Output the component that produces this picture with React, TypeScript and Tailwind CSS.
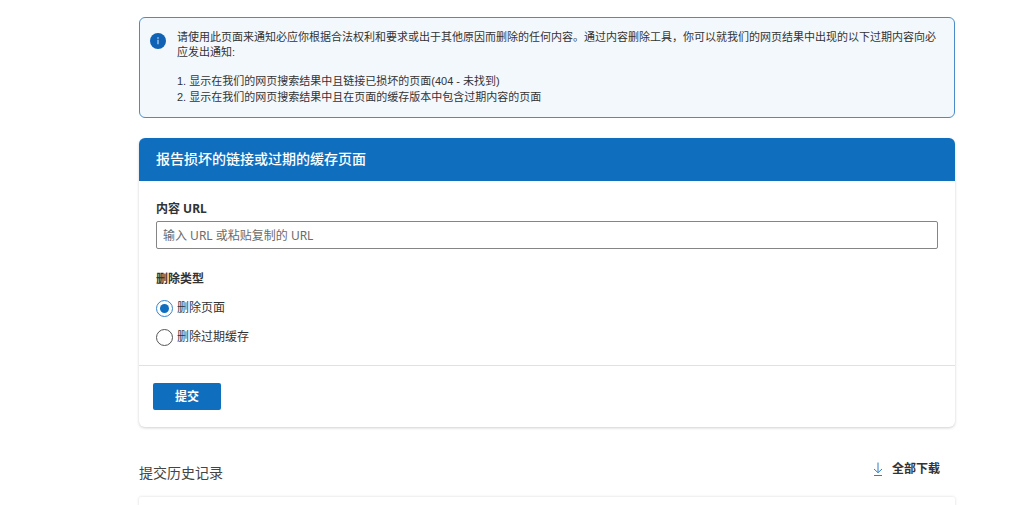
import React, { useState } from 'react';

const removalTypes = [
    { id: 'page', label: '删除页面' },
    { id: 'cache', label: '删除过期缓存' },
];

const InfoIcon = () => (
    <svg className="mt-[15px] h-4 w-4 shrink-0" viewBox="0 0 16 16" aria-hidden="true">
        <circle cx="8" cy="8" r="8" fill="#0f62b4" />
        <path d="M8 6.8v4.4" stroke="#cfe2f5" strokeWidth="1.1" />
        <circle cx="8" cy="5" r="0.8" fill="#cfe2f5" />
    </svg>
);

const DownloadIcon = () => (
    <svg className="h-4 w-3" viewBox="0 0 12 16" fill="none" stroke="#2f7fc6" aria-hidden="true">
        <path d="M6 1.5v10M2 8 6 11.7 10 8M2 14.5h8" />
    </svg>
);

const Notice = () => (
    <section className="flex gap-[11px] rounded-md border border-[#4a8cc9] bg-[#f3f8fd] pr-3 pl-[10px]">
        <InfoIcon />
        <div className="py-3 font-['Liberation_Sans','Noto_Sans_CJK_SC',sans-serif] text-[11px] leading-[15px] text-[#333]">
            <p>
                请使用此页面来通知必应你根据合法权利和要求或出于其他原因而删除的任何内容。通过内容删除工具，你可以就我们的网页结果中出现的以下过期内容向必应发出通知:
            </p>
            <ol className="mt-[13px] leading-4">
                <li>1. 显示在我们的网页搜索结果中且链接已损坏的页面(404 - 未找到)</li>
                <li>2. 显示在我们的网页搜索结果中且在页面的缓存版本中包含过期内容的页面</li>
            </ol>
        </div>
    </section>
);

const ReportForm = () => {
    const [type, setType] = useState('page');

    return (
        <form
            className="mt-5 overflow-hidden rounded-md bg-white shadow-[0_1px_3px_#00000030]"
            onSubmit={(e) => e.preventDefault()}
        >
            <h2 className="bg-[#106ebe] px-[17px] pt-[11px] pb-3 text-[14px] leading-5 font-medium text-white">
                报告损坏的链接或过期的缓存页面
            </h2>

            <div className="px-[17px] pt-[18px] pb-[18px]">
                <label htmlFor="url" className="block pb-[2px] text-[12px] leading-5 font-bold text-[#333]">
                    内容 URL
                </label>
                <input
                    id="url"
                    type="text"
                    placeholder="输入 URL 或粘贴复制的 URL"
                    className="block h-7 w-full rounded-xs border border-[#858585] px-[6px] text-[12px] text-[#333] placeholder:text-[#6b6b6b]"
                />

                <fieldset className="mt-5">
                    <legend className="text-[12px] leading-5 font-bold text-[#333]">删除类型</legend>
                    <div className="mt-[9px] flex flex-col gap-[9px]">
                        {removalTypes.map((item) => (
                            <label key={item.id} className="flex items-center gap-1 text-[12px] leading-5 text-[#333]">
                                <input
                                    type="radio"
                                    name="removal"
                                    checked={type === item.id}
                                    onChange={() => setType(item.id)}
                                    className="grid h-[17px] w-[17px] appearance-none place-items-center rounded-full border border-[#555] before:h-[9px] before:w-[9px] before:rounded-full checked:border-[#3384cc] checked:before:bg-[#106ebe]"
                                />
                                {item.label}
                            </label>
                        ))}
                    </div>
                </fieldset>
            </div>

            <div className="border-t border-[#e1e1e1] px-[14px] py-[17px]">
                <button
                    type="submit"
                    className="block h-[27px] w-[68px] rounded-xs bg-[#106ebe] text-[12px] font-bold text-white"
                >
                    提交
                </button>
            </div>
        </form>
    );
};

const App = () => {
    return (
        <div className="h-screen overflow-hidden bg-white font-['Noto_Sans','Noto_Sans_CJK_SC',sans-serif]" lang="zh-CN">
            <main className="pt-[17px] pr-[69px] pl-[139px]">
                <Notice />
                <ReportForm />

                <section className="mt-8">
                    <div className="flex items-start justify-between pr-[15px]">
                        <h2 className="mt-1 text-[14px] leading-5 text-[#444]">提交历史记录</h2>
                        <button
                            type="button"
                            className="flex items-center gap-2 text-[12px] leading-5 font-bold text-[#333]"
                        >
                            <DownloadIcon />
                            全部下载
                        </button>
                    </div>
                    <div className="mt-[14px] h-24 rounded-xs bg-white shadow-[0_0_3px_#00000028]" />
                </section>
            </main>
        </div>
    );
};

export default App;
